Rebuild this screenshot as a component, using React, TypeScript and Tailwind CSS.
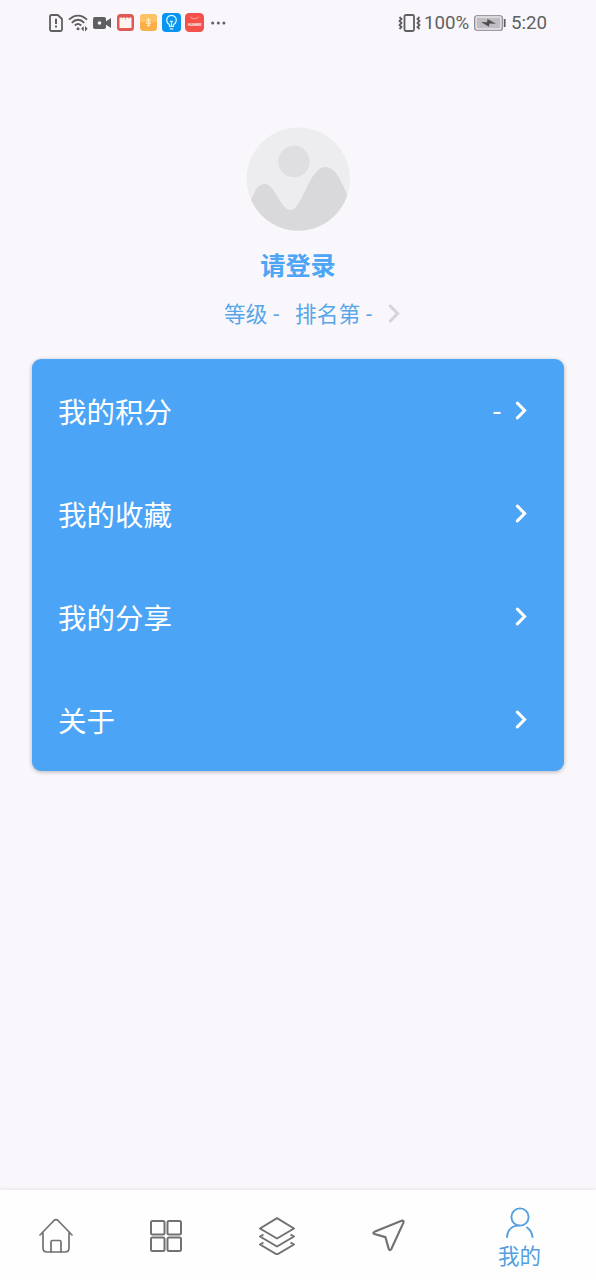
import type { ReactNode } from "react";

const menuItems = [
  { label: "我的积分", value: "-" },
  { label: "我的收藏" },
  { label: "我的分享" },
  { label: "关于" },
];

function Chevron({ className }: { className: string }) {
  return (
    <svg className={className} viewBox="0 0 12 20" fill="none" stroke="currentColor" strokeWidth="3.2" strokeLinecap="round">
      <path d="M2.2 2.2 9.800 10l-7.600 7.800" />
    </svg>
  );
}

function StatusBar() {
  return (
    <header className="flex h-[45px] shrink-0 items-center justify-between pl-[49px] pr-[49px] text-[#5f5e61]">
      <div className="flex items-center">
        {/* SIM alert */}
        <svg className="h-[18px] w-[14px]" viewBox="0 0 14 18" fill="none" stroke="currentColor" strokeWidth="1.8">
          <path d="M2.500 1h6.300L13 5v10.500a1.500 1.500 0 0 1-1.500 1.500h-9A1.500 1.500 0 0 1 1 15.500V2.500A1.500 1.500 0 0 1 2.500 1Z" />
          <path d="M7 4.800v5.200M7 11.500v2" strokeWidth="2" />
        </svg>
        {/* Wifi */}
        <svg className="ml-[5px] h-[18px] w-[21px]" viewBox="0 0 21 18" fill="none" stroke="currentColor" strokeWidth="1.900">
          <path d="M1 5.700C6.500.2 13.500.2 19 5.700M3.800 8.800c3.800-4 8.600-4 12.400 0M6.800 11.500c2.100-2 4.300-2 6.400 0" />
          <circle cx="10" cy="14.800" r="1.500" fill="currentColor" stroke="none" />
          <path d="m15.700 12-2.700 2.800 2.700 2.700Zm1.300 0 2.700 2.800-2.700 2.700Z" fill="currentColor" stroke="none" />
        </svg>
        {/* Video camera */}
        <svg className="ml-[4px] h-[14px] w-[18px]" viewBox="0 0 18 14" fill="currentColor">
          <rect y="1" width="13" height="12" rx="2" />
          <path d="m12 6 6-4v10l-6-4Z" />
          <circle cx="6.500" cy="7" r="1.800" fill="#f8f6fa" />
        </svg>
        {/* Red book app */}
        <svg className="ml-[6px] size-[17px]" viewBox="0 0 17 17">
          <rect width="17" height="17" rx="3.500" fill="#df5a54" />
          <path d="M2.500 3.500h2l.6 1 .7-1h1.900l.8 1 .8-1h1.900l.7 1 .6-1h2v10.500h-12Z" fill="#fff3f0" />
          <path d="M8.500 4.500v2" stroke="#f0a8a2" strokeWidth=".8" />
        </svg>
        {/* Orange app */}
        <svg className="ml-[6px] size-[17px]" viewBox="0 0 17 17" fill="none" stroke="#ffe9bd" strokeWidth="1.300">
          <rect width="17" height="17" rx="3.500" fill="#f9b04b" stroke="none" />
          <path d="M0 3.500A3.500 3.500 0 0 1 3.500 0h10A3.500 3.500 0 0 1 17 3.500V8H0Z" fill="#fbc266" stroke="none" />
          <path d="M8.500 4v8M6.500 6h4M6 9h5M7 11.500h3" />
        </svg>
        {/* Blue bulb app */}
        <svg className="ml-[5px] size-[19px]" viewBox="0 0 19 19" fill="none" stroke="#dff5ff" strokeWidth="1.200">
          <rect width="19" height="19" rx="4" fill="#0895f2" stroke="none" />
          <path d="M7.500 13.500v-2a4.800 4.800 0 1 1 4 0v2ZM9.500 13V8.500M8 8l1.500 1L11 8M7.800 15.800h3.400" />
        </svg>
        {/* Huawei app */}
        <svg className="ml-[4px] size-[19px]" viewBox="0 0 18 18" fill="none" stroke="#ffb5ae" strokeWidth="1">
          <rect width="18" height="18" rx="4" fill="#f4514b" stroke="none" />
          <path d="M5 3.500c1 2.500 7 2.500 8 0" strokeWidth=".8" />
          <text x="2.500" y="12.300" fontSize="4" textLength="13" fontWeight="700" fill="#ffe6e3" stroke="none" fontFamily="Roboto">
            HUAWEI
          </text>
        </svg>
        <svg className="ml-[7px] h-[4px] w-[15px]" viewBox="0 0 15 4" fill="currentColor">
          <circle cx="1.700" cy="2" r="1.500" />
          <circle cx="7.300" cy="2" r="1.500" />
          <circle cx="12.900" cy="2" r="1.500" />
        </svg>
      </div>

      <div className="flex items-center pt-px font-['Roboto',sans-serif] text-[18.700px] leading-[20px]">
        {/* Vibrate */}
        <svg className="h-[18px] w-[23px]" viewBox="0 0 23 18" fill="none" stroke="currentColor" strokeWidth="1.800">
          <rect x="6.500" y="1" width="9.500" height="16" rx="1.500" />
          <path d="m1.500 3 2 2-2 2 2 2-2 2 2 2-2 2M21.500 3l-2 2 2 2-2 2 2 2-2 2 2 2" />
        </svg>
        <span className="ml-[3px] w-[45px] whitespace-nowrap">100%</span>
        {/* Battery */}
        <svg className="ml-[5px] h-[16px] w-[32px]" viewBox="0 0 32 16" fill="none">
          <rect x=".75" y=".75" width="27.500" height="14.500" rx="2" fill="#f8f6fa" stroke="#807e82" strokeWidth="1.200" />
          <rect x="2.500" y="2.500" width="24" height="11" fill="#c0bec2" />
          <path d="m7 7 6 .2.500-3.200L22 8.800l-6.500-.2-.5 3.200Z" fill="#4f4e51" />
          <path d="M30.700 4v8" stroke="#605f62" strokeWidth="1.800" />
        </svg>
        <span className="ml-[5px] w-[36px] whitespace-nowrap">5:20</span>
      </div>
    </header>
  );
}

function Avatar() {
  return (
    <svg className="size-[104px]" viewBox="0 0 104 104">
      <defs>
        <clipPath id="avatar">
          <circle cx="52.300" cy="52" r="51.600" />
        </clipPath>
      </defs>
      <g clipPath="url(#avatar)">
        <rect width="104" height="104" fill="#edecee" />
        <circle cx="48" cy="34.500" r="15.700" fill="#dfdee0" />
        <path
          d="M0 86C7 69 10 57 18.500 57C29.500 57 34.500 83 44.500 83C56.500 83 63 40 79.500 40C90 40 96 55 104 75V104H0Z"
          fill="#d9d8da"
        />
      </g>
    </svg>
  );
}

function Dash() {
  return <span className="ml-px font-['Roboto',sans-serif]">-</span>;
}

function TabItem({ children }: { children: ReactNode }) {
  return <button className="flex w-[111px] items-center justify-center pt-px">{children}</button>;
}

function BottomNav() {
  return (
    <nav className="flex h-[90px] shrink-0 bg-[#fefefe] text-[#717073] shadow-[0_-1px_4px_rgba(0,0,0,0.08)]">
      <TabItem>
        <svg className="h-[36px] w-[34px]" viewBox="0 0 34 36" fill="none" stroke="currentColor" strokeWidth="1.700" strokeLinecap="round" strokeLinejoin="round">
          <path d="M1 17 15 2.500q2-1.800 4 0L33 17M4 15v15q0 4 4 4h18q4 0 4-4V15" />
          <path d="M12 34V24q0-1.500 1.500-1.500h7q1.500 0 1.500 1.500v10" />
        </svg>
      </TabItem>
      <TabItem>
        <svg className="mr-px size-[32px]" viewBox="0 0 32 32" fill="none" stroke="currentColor" strokeWidth="2">
          <rect x="1" y="1" width="13.500" height="13.500" rx="1.500" />
          <rect x="17.500" y="1" width="13.500" height="13.500" rx="1.500" />
          <rect x="1" y="17.500" width="13.500" height="13.500" rx="1.500" />
          <rect x="17.500" y="17.500" width="13.500" height="13.500" rx="1.500" />
        </svg>
      </TabItem>
      <TabItem>
        <svg className="mr-px h-[38px] w-[36px]" viewBox="0 0 36 38" fill="none" stroke="currentColor" strokeWidth="2" strokeLinejoin="round">
          <path d="M18 1.200 35 11.500 18 21.500 1 11.500Z" />
          <path d="M4.500 17.500 1 19.500l17 10 17-10-3.500-2M4.500 25.500 1 27.500l17 10 17-10-3.500-2" />
        </svg>
      </TabItem>
      <TabItem>
        <svg className="mr-px size-[33px]" viewBox="0 0 34 34" fill="none" stroke="currentColor" strokeWidth="2.200" strokeLinejoin="round">
          <path d="M30.500 1.800 2.500 13.200q-2.200 1.300 0 2.300l11.300 3.200L17.300 31q1.200 2.200 2.500.2L32.500 3.500q.5-2.200-2-1.700Z" />
        </svg>
      </TabItem>
      <button className="flex flex-1 flex-col items-center pt-[17px] pr-px text-[#549fdf]">
        <svg className="h-[31px] w-[28px]" viewBox="0 0 28 31" fill="none" stroke="currentColor" strokeWidth="1.900" strokeLinecap="round">
          <circle cx="14" cy="10" r="8.600" />
          <path d="M1 30c.5-7 5-11.400 12-11.600M21 20.500q5 3.500 5.500 9.500" />
        </svg>
        <span className="mt-[3px] text-[21.500px] leading-[28px]">我的</span>
      </button>
    </nav>
  );
}

export default function App() {
  return (
    <div className="flex h-[1280px] w-[596px] flex-col bg-[#f9f7fb] font-['Noto_Sans_CJK_SC',sans-serif]">
      <StatusBar />

      <main className="flex flex-1 flex-col pt-[82px]">
        <div className="flex flex-col items-center">
          <Avatar />
          <h1 className="mt-[15px] text-[25.200px] leading-[36px] font-bold text-[#4ca5f5]">请登录</h1>
          <div className="mt-[15px] ml-[28px] flex h-[32px] items-center text-[21.700px] leading-[32px] text-[#56a6e9]">
            <span className="w-[71px] pt-px whitespace-nowrap">
              等级 <Dash />
            </span>
            <span className="w-[93px] pt-px whitespace-nowrap">
              排名第 <Dash />
            </span>
            <Chevron className="h-[19px] w-[12px] text-[#d7d5d9]" />
          </div>
        </div>

        <section className="mx-8 mt-[30px] flex flex-col rounded-[9px] bg-[#4ba4f5] text-white shadow-[0_1px_4px_rgba(0,0,0,0.28)]">
          {menuItems.map((item) => (
            <button key={item.label} className="flex h-[103px] items-center pr-[37px] pl-[26px]">
              <span className="pt-px text-[28.500px] leading-[40px]">{item.label}</span>
              {item.value && (
                <span className="mr-[14px] ml-auto pt-[2px] font-['Roboto',sans-serif] text-[28.500px] leading-[40px]">
                  {item.value}
                </span>
              )}
              <Chevron className={item.value ? "h-[19px] w-[12px]" : "ml-auto h-[19px] w-[12px]"} />
            </button>
          ))}
        </section>
      </main>

      <BottomNav />
    </div>
  );
}
